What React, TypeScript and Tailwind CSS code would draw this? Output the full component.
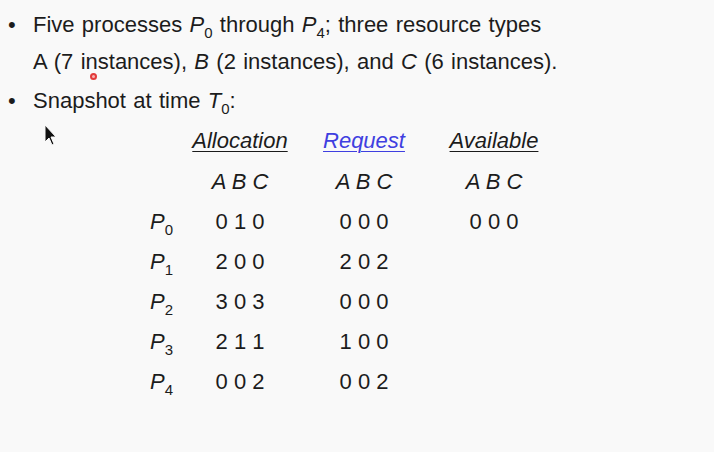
export default function App() {
  const rows = [
    { p: "0", alloc: "0 1 0", req: "0 0 0", avail: "0 0 0" },
    { p: "1", alloc: "2 0 0", req: "2 0 2", avail: "" },
    { p: "2", alloc: "3 0 3", req: "0 0 0", avail: "" },
    { p: "3", alloc: "2 1 1", req: "1 0 0", avail: "" },
    { p: "4", alloc: "0 0 2", req: "0 0 2", avail: "" },
  ];

  return (
    <div className="relative w-[714px] h-[452px] overflow-hidden bg-[#f9f9f9] text-[#1c1c1c] text-[22px] font-['Liberation_Sans',Arial,sans-serif]">
      {/* Bullets */}
      <div className="pt-[6px] [word-spacing:1.2px]">
        <div className="flex leading-[37px]">
          <span className="w-[33px] pl-[8px]">•</span>
          <div>
            <div>
              Five processes <i>P</i>
              <sub className="text-[15px] bottom-[-6px]">0</sub> through <i>P</i>
              <sub className="text-[15px] bottom-[-6px]">4</sub>; three resource types
            </div>
            <div>
              A (7 instances), <i>B</i> (2 instances), and <i>C</i> (6 instances).
            </div>
          </div>
        </div>
        <div className="flex leading-[37px] mt-[2px]">
          <span className="w-[33px] pl-[8px]">•</span>
          <div>
            Snapshot at time <i>T</i>
            <sub className="text-[15px] bottom-[-6px]">0</sub>:
          </div>
        </div>
      </div>

      {/* Snapshot table */}
      <div className="ml-[150px] mt-[2px] leading-[40px]">
        <div className="flex h-10">
          <div className="w-[28px]" />
          <div className="w-[124px] text-center italic underline underline-offset-[3px] decoration-1">Allocation</div>
          <div className="w-[124px] text-center italic underline underline-offset-[3px] decoration-1 text-[#3f3fe0]">Request</div>
          <div className="w-[136px] text-center italic underline underline-offset-[3px] decoration-1">Available</div>
        </div>
        <div className="flex h-10 mt-[1px]">
          <div className="w-[28px]" />
          <div className="w-[124px] text-center italic">A B C</div>
          <div className="w-[124px] text-center italic">A B C</div>
          <div className="w-[136px] text-center italic">A B C</div>
        </div>
        {rows.map((r) => (
          <div key={r.p} className="flex h-10">
            <div className="w-[28px] whitespace-nowrap">
              <i>P</i>
              <sub className="text-[15px] bottom-[-6px]">{r.p}</sub>
            </div>
            <div className="w-[124px] text-center">{r.alloc}</div>
            <div className="w-[124px] text-center">{r.req}</div>
            <div className="w-[136px] text-center">{r.avail}</div>
          </div>
        ))}
      </div>

      {/* Click indicator */}
      <div className="absolute left-[90px] top-[73px] w-[7px] h-[7px] rounded-full border-2 border-[#e23b3b] bg-[#f6b3b3]" />

      {/* Mouse cursor */}
      <svg className="absolute left-[44px] top-[124px]" width="14" height="24" viewBox="0 0 14 24">
        <path d="M1 1 L1 18 L5 14 L8 21 L10 20 L7 13 L12 13 Z" fill="#111" stroke="#f9f9f9" strokeWidth="1" />
      </svg>
    </div>
  );
}
